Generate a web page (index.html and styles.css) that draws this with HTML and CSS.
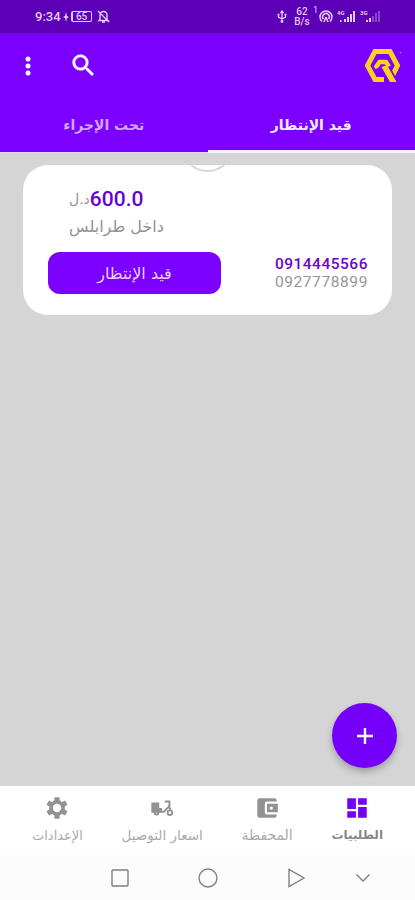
FILE: index.html
```html
<!DOCTYPE html>
<html lang="ar" dir="rtl">
<head>
    <meta charset="UTF-8">
    <meta name="viewport" content="width=device-width, initial-scale=1.0">
    <title>الطلبيات</title>
    <link rel="stylesheet" href="styles.css">
</head>
<body>
    <div class="status-bar" dir="ltr">
        <div class="status-left">
            <span class="clock">9:34</span>
            <svg width="6" height="10" viewBox="0 0 6 10"><path d="M3 0l1 4 2 1-2 1-1 4-1-4-2-1 2-1z" fill="currentColor"/></svg>
            <span class="battery">65</span>
            <svg class="bell" width="13" height="13" viewBox="0 0 13 13" fill="none" stroke="currentColor" stroke-width="1.400"><path d="M3 9.500V5a3.500 3.500 0 0 1 7 0v4.500l1 1H2zM5 12h3M1 1l11 11"/></svg>
        </div>
        <div class="status-right">
            <svg class="usb" width="10" height="13" viewBox="0 0 10 13" fill="none" stroke="currentColor" stroke-width="1.300"><path d="M5 1v11M3.500 3L5 1l1.500 2M1.500 4v3L5 9l3.500-2V4M.5 4.500h2M7.500 4.500h2"/><circle cx="5" cy="11.500" r=".8"/></svg>
            <span class="speed">62<br>B/s</span>
            <span class="hotspot-count">1</span>
            <svg class="hotspot" width="14" height="13" viewBox="0 0 14 13" fill="none" stroke="currentColor" stroke-width="1.500"><path d="M3 11.500a6 6 0 1 1 8 0M4.500 9a3.300 3.300 0 1 1 5 0"/><path d="M7 7l-2 5M7 7l2 5"/></svg>
            <svg class="signal" width="19" height="13" viewBox="0 0 19 13" fill="currentColor"><text x="0" y="5">4G</text><path d="M3 10h1.500v2H3zM7 9h2v3H7zM10 7h2v5h-2zM13 4h2v8h-2zM16 1h2v11h-2z"/></svg>
            <svg class="signal" width="21" height="13" viewBox="0 0 21 13" fill="currentColor"><text x="0" y="5">3G</text><path d="M6 10h2v2H6zM9 8h2v4H9z"/><path opacity=".35" d="M12 6h2v6h-2zM15 3h2v9h-2zM18 1h2v11h-2z"/></svg>
        </div>
    </div>

    <header class="app-header">
        <div class="toolbar">
            <svg class="logo" width="38" height="36" viewBox="0 0 38 36">
                <g fill="none" stroke="#ffd21c">
                    <path stroke-width="5" d="M20 31.500H11L3.500 17.500 11 3.500h15l7.500 14-3 6"/>
                    <path stroke-width="4.500" d="M13.500 20l-1-1.500 3-4.500h6.500l3 4.500"/>
                </g>
                <path fill="#ffd21c" d="M17.500 19l5.500-2 9.500 17h-6.500zM28 22h6l-3 6z"/>
                <circle cx="36.500" cy="4.500" r=".8" fill="#b78c90"/>
            </svg>
            <div class="actions">
                <svg width="29" height="29" viewBox="0 0 24 24" fill="#fff" stroke="#fff" stroke-width=".4"><path d="M15.500 14h-.79l-.28-.27A6.471 6.471 0 0 0 16 9.500 6.500 6.500 0 1 0 9.500 16c1.610 0 3.090-.59 4.230-1.570l.27.28v.79l5 4.990L20.490 19l-4.990-5zm-6 0C7.010 14 5 11.990 5 9.500S7.010 5 9.500 5 14 7.010 14 9.500 11.990 14 9.500 14z"/></svg>
                <svg width="6" height="20" viewBox="0 0 6 20" fill="#fff"><circle cx="3" cy="3" r="2.500"/><circle cx="3" cy="10" r="2.500"/><circle cx="3" cy="17" r="2.500"/></svg>
            </div>
        </div>
        <nav class="tabs">
            <div class="tab active"><span>قيد الإنتظار</span></div>
            <div class="tab"><span>تحت الإجراء</span></div>
        </nav>
    </header>

    <main class="content">
        <div class="card">
            <div class="notch"></div>
            <div class="phones" dir="ltr">
                <span class="phone-main">0914445566</span>
                <span class="phone-alt">0927778899</span>
            </div>
            <div class="order">
                <div class="price"><b>600.0</b><span>د.ل</span></div>
                <div class="area">داخل طرابلس</div>
                <button class="state">قيد الإنتظار</button>
            </div>
        </div>
        <button class="fab">
            <svg width="18" height="18" viewBox="0 0 18 18"><path d="M9 1v16M1 9h16" stroke="#fff" stroke-width="2.400"/></svg>
        </button>
    </main>

    <nav class="bottom-nav">
        <div class="nav-item orders active">
            <svg width="28" height="28" viewBox="0 0 24 24" fill="currentColor"><path d="M3 13h8V3H3v10zm0 8h8v-6H3v6zm10 0h8V11h-8v10zm0-18v6h8V3h-8z"/></svg>
            <span>الطلبيات</span>
        </div>
        <div class="nav-item wallet">
            <svg width="28" height="28" viewBox="0 0 24 24" fill="currentColor"><path d="M21 18v1c0 1.100-.9 2-2 2H5a2 2 0 0 1-2-2V5a2 2 0 0 1 2-2h14c1.100 0 2 .9 2 2v1h-9a2 2 0 0 0-2 2v8a2 2 0 0 0 2 2h9zm-9-2h10V8H12v8zm4-2.500a1.500 1.500 0 1 1 0-3 1.500 1.500 0 0 1 0 3z"/></svg>
            <span>المحفظة</span>
        </div>
        <div class="nav-item prices">
            <svg width="28" height="28" viewBox="0 0 28 28" fill="none" stroke="currentColor" stroke-width="2"><path fill="currentColor" stroke="none" d="M2.500 8H11v6h3v5H2.500z"/><path d="M13 18h3l6-6V7h-5M21 11l2 5"/><circle cx="8" cy="19" r="2"/><circle cx="22.500" cy="19" r="2.500"/></svg>
            <span>اسعار التوصيل</span>
        </div>
        <div class="nav-item settings">
            <svg width="28" height="28" viewBox="0 0 28 28" fill="none" stroke="currentColor"><circle cx="14" cy="14" r="6.500" stroke-width="4"/><path stroke-width="5.500" d="M14 2.500v4M14 21.500v4M4.040 8.250l3.460 2M20.500 17.750l3.460 2M4.040 19.750l3.460-2M20.500 10.250l3.460-2"/></svg>
            <span>الإعدادات</span>
        </div>
    </nav>

    <div class="system-bar" dir="ltr">
        <svg width="20" height="20" viewBox="0 0 20 20"><rect x="2" y="2" width="16" height="16" rx="1"/></svg>
        <svg width="20" height="20" viewBox="0 0 20 20"><circle cx="10" cy="10" r="9"/></svg>
        <svg width="20" height="20" viewBox="0 0 20 20"><path d="M3 1.500v17L18 10z"/></svg>
        <svg class="hide-bar" width="16" height="20" viewBox="0 0 16 20"><path d="M1.500 6.500L8 13l6.500-6.500"/></svg>
    </div>
</body>
</html>
```

FILE: styles.css
```css
* {
    box-sizing: border-box;
}
body {
    margin: 0;
    height: 900px;
    display: flex;
    flex-direction: column;
    overflow: hidden;
    background: #d5d5d5;
    font-family: "DejaVu Sans", sans-serif;
}
svg {
    display: block;
    flex: none;
}
button {
    border: none;
    padding: 0;
    font-family: inherit;
    cursor: pointer;
}
.status-bar {
    height: 33px;
    display: flex;
    justify-content: space-between;
    padding: 0 34px 0 35px;
    background: #5c00b8;
    color: #e3c9f5;
    font-family: Roboto, sans-serif;
}
.status-left,
.status-right {
    display: flex;
    align-items: center;
}
.clock {
    margin-right: 2px;
    font-size: 13px;
    font-weight: 500;
}
.battery {
    width: 21px;
    height: 11px;
    margin: 0 5px 0 2px;
    border: 1px solid;
    border-left-width: 2px;
    border-radius: 2px;
    font-size: 10px;
    font-weight: 500;
    line-height: 9px;
    text-align: center;
}
.usb {
    margin-right: 7px;
}
.speed {
    width: 16px;
    font-size: 10px;
    font-weight: 500;
    line-height: 10px;
    text-align: center;
}
.hotspot-count {
    margin: -13px 1px 0 3px;
    font-size: 9px;
}
.signal {
    margin-left: 4px;
}
.signal text {
    font-size: 6px;
    font-weight: bold;
}
.app-header {
    height: 120px;
    background: #7b00ff;
}
.toolbar {
    height: 65px;
    display: flex;
    justify-content: space-between;
    align-items: center;
    padding: 0 13px 0 25px;
}
.actions {
    display: flex;
    align-items: center;
    gap: 38px;
}
.tabs {
    display: flex;
    height: 55px;
}
.tab {
    flex: 1;
    display: flex;
    justify-content: center;
    padding-top: 17px;
    border-bottom: 1px solid #e3d4f2;
    color: #d2a6ff;
    font-size: 14px;
    font-weight: bold;
    line-height: 20px;
}
.tab.active {
    border-bottom: 3px solid #f8efff;
    color: #f6ebff;
}
.content {
    flex: 1;
    display: flex;
    flex-direction: column;
    justify-content: space-between;
    padding: 12px 23px 18px 18px;
}
.card {
    position: relative;
    display: flex;
    justify-content: space-between;
    width: 369px;
    height: 150px;
    padding: 20px 25px 21px;
    border-radius: 25px;
    background: #fff;
    overflow: hidden;
}
.notch {
    position: absolute;
    top: -46px;
    left: 158px;
    width: 53px;
    height: 53px;
    border: 2px solid #d8d8d8;
    border-radius: 50%;
}
.phones {
    display: flex;
    flex-direction: column;
    justify-content: flex-end;
    margin-right: -1px;
    padding-bottom: 3px;
    font-family: Roboto, sans-serif;
    font-size: 15.500px;
    line-height: 18px;
    letter-spacing: 0.500px;
}
.phone-main {
    color: #6c00d8;
    font-weight: 500;
}
.phone-alt {
    color: #969696;
    letter-spacing: 0.600px;
}
.order {
    display: flex;
    flex-direction: column;
    width: 173px;
}
.price {
    display: flex;
    justify-content: flex-end;
    align-items: center;
    height: 28px;
    padding-left: 21px;
    color: #929292;
    font-size: 14px;
}
.price b {
    color: #6800d2;
    font-family: Roboto, sans-serif;
    font-size: 21px;
    font-weight: 500;
}
.area {
    height: 28px;
    padding-left: 21px;
    color: #929292;
    font-size: 16px;
    line-height: 27px;
    text-align: left;
}
.state {
    height: 42px;
    margin-top: 11px;
    flex: none;
    border-radius: 12px;
    background: #7b00ff;
    color: #e9d4ff;
    font-size: 16px;
}
.fab {
    display: flex;
    align-items: center;
    justify-content: center;
    align-self: flex-start;
    width: 65px;
    height: 65px;
    margin-right: -5px;
    border-radius: 50%;
    background: #7400fa;
    box-shadow: 0 4px 7px rgba(0, 0, 0, 0.25);
}
.bottom-nav {
    display: flex;
    justify-content: space-between;
    height: 69px;
    padding: 8px 32px 0;
    background: #fff;
}
.nav-item {
    display: flex;
    flex-direction: column;
    align-items: center;
    color: #929292;
    font-size: 13px;
    line-height: 27px;
    white-space: nowrap;
}
.nav-item svg {
    width: 26px;
    height: 28px;
}
.nav-item span {
    color: #aaa;
}
.nav-item.wallet {
    font-size: 14px;
}
.nav-item.prices {
    font-size: 13.500px;
}
.nav-item.orders {
    font-size: 12px;
}
.nav-item.active svg {
    color: #7600f5;
}
.nav-item.active span {
    color: #888;
    font-weight: bold;
}
.system-bar {
    display: flex;
    gap: 68px;
    height: 45px;
    padding: 13px 0 0 110px;
    background: #fcfcfc;
}
.system-bar svg {
    fill: none;
    stroke: #808080;
    stroke-width: 1.400;
}
.system-bar .hide-bar {
    margin-left: -19px;
}
```
